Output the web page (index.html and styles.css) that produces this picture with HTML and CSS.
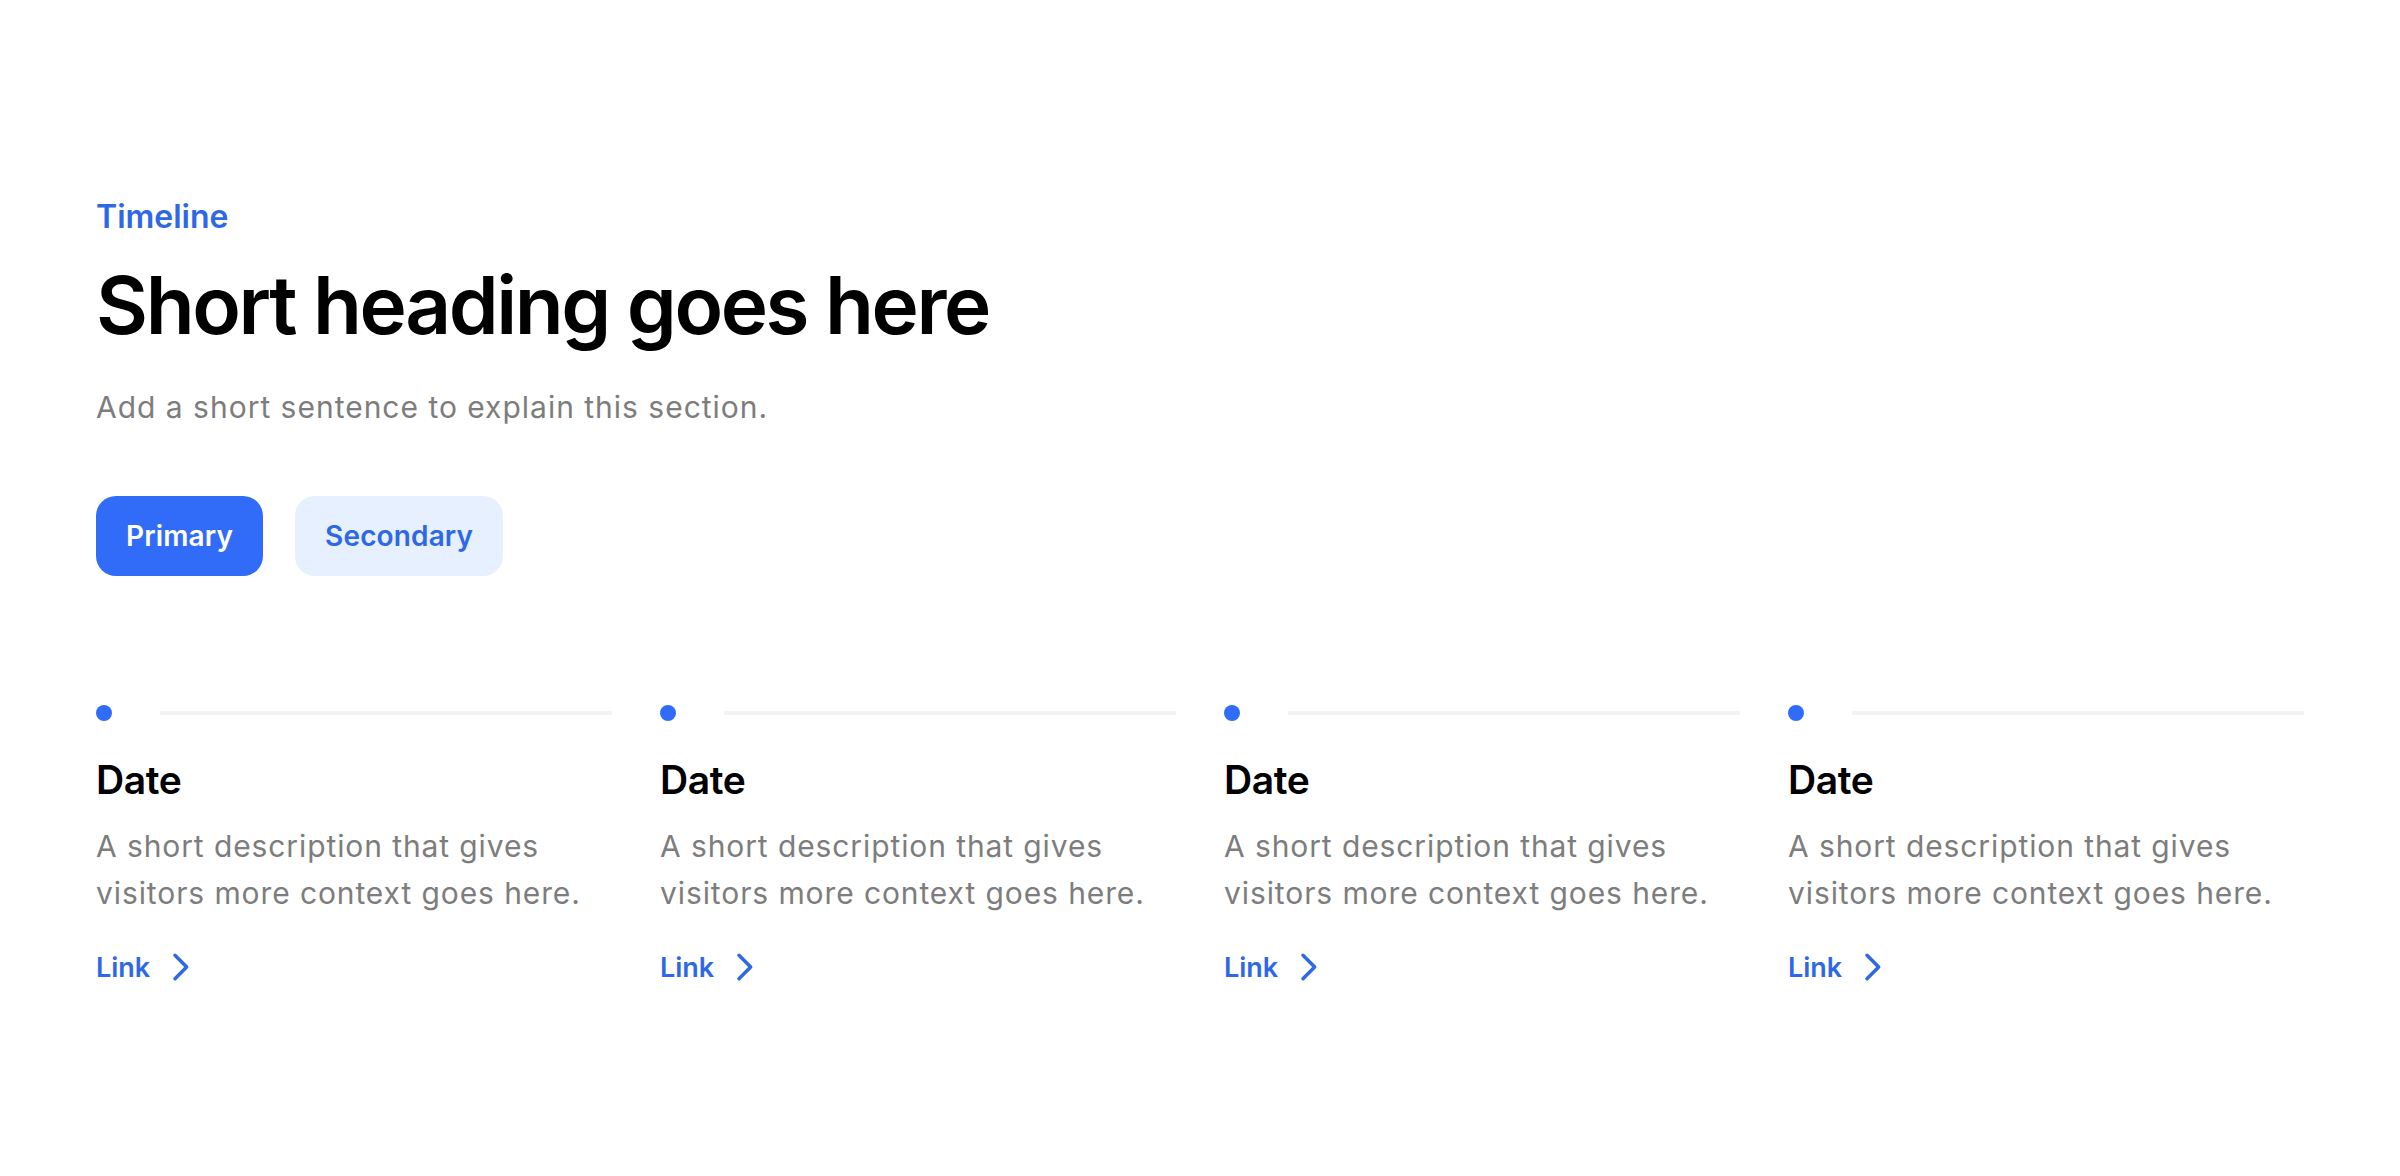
FILE: index.html
```html
<!DOCTYPE html>
<html lang="en">
<head>
<meta charset="utf-8">
<title>Timeline</title>
<link rel="stylesheet" href="styles.css">
</head>
<body>
<section class="section">
  <p class="eyebrow">Timeline</p>
  <h1 class="heading">Short heading goes here</h1>
  <p class="lead">Add a short sentence to explain this section.</p>
  <div class="actions">
    <a class="btn btn-primary" href="#">Primary</a>
    <a class="btn btn-secondary" href="#">Secondary</a>
  </div>
  <div class="timeline">
    <div class="item">
      <div class="marker"><span class="dot"></span><span class="line"></span></div>
      <h3 class="date">Date</h3>
      <p class="desc">A short description that gives visitors more context goes here.</p>
      <a class="link" href="#">Link <svg class="chev" viewBox="0 0 24 24" width="40" height="40"><path d="M9 5l7 7-7 7" fill="none" stroke="currentColor" stroke-width="2.1" stroke-linecap="round" stroke-linejoin="round"/></svg></a>
    </div>
    <div class="item">
      <div class="marker"><span class="dot"></span><span class="line"></span></div>
      <h3 class="date">Date</h3>
      <p class="desc">A short description that gives visitors more context goes here.</p>
      <a class="link" href="#">Link <svg class="chev" viewBox="0 0 24 24" width="40" height="40"><path d="M9 5l7 7-7 7" fill="none" stroke="currentColor" stroke-width="2.1" stroke-linecap="round" stroke-linejoin="round"/></svg></a>
    </div>
    <div class="item">
      <div class="marker"><span class="dot"></span><span class="line"></span></div>
      <h3 class="date">Date</h3>
      <p class="desc">A short description that gives visitors more context goes here.</p>
      <a class="link" href="#">Link <svg class="chev" viewBox="0 0 24 24" width="40" height="40"><path d="M9 5l7 7-7 7" fill="none" stroke="currentColor" stroke-width="2.1" stroke-linecap="round" stroke-linejoin="round"/></svg></a>
    </div>
    <div class="item">
      <div class="marker"><span class="dot"></span><span class="line"></span></div>
      <h3 class="date">Date</h3>
      <p class="desc">A short description that gives visitors more context goes here.</p>
      <a class="link" href="#">Link <svg class="chev" viewBox="0 0 24 24" width="40" height="40"><path d="M9 5l7 7-7 7" fill="none" stroke="currentColor" stroke-width="2.1" stroke-linecap="round" stroke-linejoin="round"/></svg></a>
    </div>
  </div>
</section>
</body>
</html>
```
FILE: styles.css
```css
html, body {
  margin: 0;
  padding: 0;
  background: #ffffff;
}
body {
  font-family: Inter, "Noto Sans", "Liberation Sans", sans-serif;
  color: #000;
}
.section {
  padding: 193px 96px 0 96px;
}
.eyebrow {
  margin: 0;
  font-size: 32px;
  line-height: 48px;
  font-weight: 600;
  color: #2f68e6;
}
.heading {
  margin: 16px 0 0 0;
  font-size: 80px;
  line-height: 96px;
  font-weight: 600;
  letter-spacing: -0.03em;
  color: #000;
}
.lead {
  margin: 32px 0 0 0;
  font-size: 30px;
  line-height: 45px;
  letter-spacing: 0.033em;
  color: #7d7d7d;
}
.actions {
  display: flex;
  gap: 32px;
  margin-top: 66px;
}
.btn {
  display: inline-flex;
  align-items: center;
  height: 80px;
  padding: 0 30px;
  box-sizing: border-box;
  border-radius: 20px;
  font-size: 28px;
  font-weight: 600;
  letter-spacing: 0.005em;
  text-decoration: none;
}
.btn-primary {
  background: #306cf7;
  color: #fff;
}
.btn-secondary {
  background: #e6f0fe;
  color: #2f68e6;
}
.timeline {
  display: grid;
  grid-template-columns: repeat(4, 1fr);
  gap: 48px;
  margin-top: 129px;
}
.marker {
  display: flex;
  align-items: center;
  gap: 48px;
  height: 16px;
}
.dot {
  width: 16px;
  height: 16px;
  border-radius: 50%;
  background: #306cf7;
  flex: none;
}
.line {
  flex: 1;
  height: 4px;
  background: #f3f3f3;
}
.date {
  margin: 35px 0 0 0;
  font-size: 39px;
  line-height: 48px;
  font-weight: 600;
  letter-spacing: -0.01em;
}
.desc {
  margin: 19px 0 0 0;
  font-size: 30px;
  line-height: 47px;
  letter-spacing: 0.03em;
  color: #7d7d7d;
}
.link {
  display: inline-flex;
  align-items: center;
  gap: 10px;
  margin-top: 30px;
  font-size: 27px;
  line-height: 39px;
  font-weight: 600;
  color: #2f68e6;
  text-decoration: none;
}
.chev {
  display: block;
}
```
